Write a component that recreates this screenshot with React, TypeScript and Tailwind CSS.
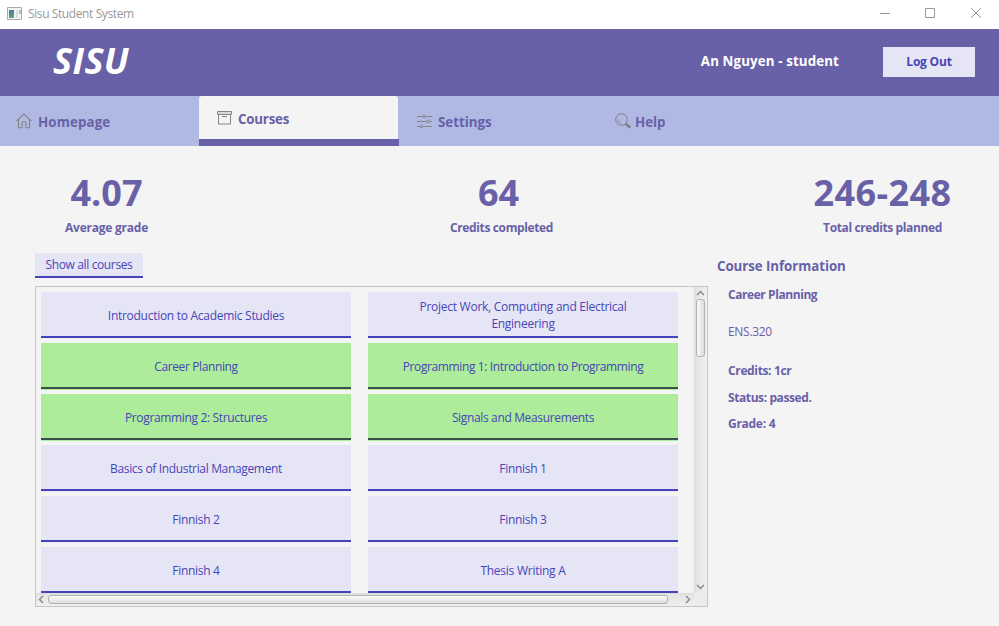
import React from "react";

type Course = { name: string; passed?: boolean; tracking: string };

const courses: Course[] = [
  { name: "Introduction to Academic Studies", tracking: "tracking-[-0.28px]" },
  { name: "Project Work, Computing and Electrical Engineering", tracking: "tracking-[-0.27px]" },
  { name: "Career Planning", passed: true, tracking: "tracking-[-0.38px]" },
  { name: "Programming 1: Introduction to Programming", passed: true, tracking: "tracking-[-0.38px]" },
  { name: "Programming 2: Structures", passed: true, tracking: "tracking-[-0.34px]" },
  { name: "Signals and Measurements", passed: true, tracking: "tracking-[-0.35px]" },
  { name: "Basics of Industrial Management", tracking: "tracking-[-0.34px]" },
  { name: "Finnish 1", tracking: "tracking-[-0.3px]" },
  { name: "Finnish 2", tracking: "tracking-[-0.3px]" },
  { name: "Finnish 3", tracking: "tracking-[-0.3px]" },
  { name: "Finnish 4", tracking: "tracking-[-0.3px]" },
  { name: "Thesis Writing A", tracking: "tracking-[-0.25px]" },
];

function HomeIcon() {
  return (
    <svg width="16" height="16" viewBox="0 0 16 16" fill="none" stroke="#858585" strokeWidth="1.100">
      <path d="M.6 8.200 8 1l7.400 7.200M2.500 6.800v8h3.600V10q0-1.500 1.900-1.500T9.900 10v4.800h3.600v-8" />
    </svg>
  );
}

function ArchiveIcon() {
  return (
    <svg width="15" height="14" viewBox="0 0 15 14" fill="none" stroke="#858585">
      <path d="M.5.5h14v3H.5zM1.500 3.500v9.500h12V3.500M5 5.500h5" />
      <path d="M1 2h13" stroke="#bdbdbd" />
    </svg>
  );
}

function SlidersIcon() {
  return (
    <svg width="15" height="14" viewBox="0 0 15 14" fill="none" stroke="#858585">
      <path d="M0 2.500h5.500M8.500 2.500H15M0 7.500h9.500M12.500 7.500H15M0 12.500h3M6 12.500h9" />
      <circle cx="7" cy="2.500" r="1.300" />
      <circle cx="11" cy="7.500" r="1.300" />
      <circle cx="4.500" cy="12.500" r="1.300" />
    </svg>
  );
}

function SearchIcon() {
  return (
    <svg width="17" height="17" viewBox="0 0 17 17" fill="none" stroke="#808080">
      <circle cx="6.500" cy="6.500" r="5.800" />
      <path d="M3 6.500q.3 2.800 3 3.600" strokeWidth=".8" />
      <path d="m10.800 10.800 4.500 4" strokeWidth="2.600" />
    </svg>
  );
}

function Chevron({ d, w, h }: { d: string; w: number; h: number }) {
  return (
    <svg width={w} height={h} viewBox={`0 0 ${w} ${h}`} fill="none" stroke="#858585" strokeWidth="1.300">
      <path d={d} />
    </svg>
  );
}

function CourseButton({ course }: { course: Course }) {
  return (
    <button className={`block h-[47px] w-[310px] shrink-0 pb-px ${course.passed ? "bg-[#adec9a]" : "bg-[#ebebf5]"}`}>
      <span
        className={`flex h-[46px] items-center justify-center border-b-2 px-7 pt-0.5 text-center text-[12px] leading-[17px] text-[#4646b8] ${
          course.passed ? "border-[#3d4f4b] bg-[#adec9a]" : "border-[#4444b8] bg-[#e6e5f5]"
        } ${course.tracking}`}
      >
        <span className="max-w-[246px]">{course.name}</span>
      </span>
    </button>
  );
}

export default function App() {
  return (
    <div className="flex h-[626px] w-[999px] flex-col overflow-hidden bg-[#f4f4f4] font-['Open_Sans','Noto_Sans',sans-serif] text-[#6861a7]">
      <div className="flex h-[29px] shrink-0 items-center bg-white pb-[3px] pl-[7px] text-[#999]">
        <svg width="16" height="13" viewBox="0 0 16 13">
          <defs>
            <linearGradient id="pane" x2="0.3" y2="1">
              <stop stopColor="#4470a8" />
              <stop offset="1" stopColor="#5ea777" />
            </linearGradient>
          </defs>
          <path d="M.5.5h14v12H.5z" fill="#f4f4f4" stroke="#aaa" />
          <path d="M2 3h5v8H2z" fill="url(#pane)" />
          <path d="M9 3h2v8H9z" fill="#ddd" />
          <path d="M12 3h2v4h-2z" fill="#a4c7b2" />
        </svg>
        <span className="ml-[5px] flex-1 pt-px text-[12px] leading-4 tracking-[-0.4px]">Sisu Student System</span>
        <svg width="119" height="29" viewBox="0 0 119 29" fill="none" stroke="#999" className="mt-[3px]">
          <path d="M0 13.500h10M45.500 8.500h9v9h-9zM91 8l10 10M101 8 91 18" />
        </svg>
      </div>

      <header className="flex h-[67px] shrink-0 items-center bg-[#6861a7] pr-6 pb-[2px] pl-[53px] text-white">
        <h1 className="flex-1 pb-px text-[36px] leading-10 font-bold tracking-[0.4px] italic">SISU</h1>
        <span className="text-[13.300px] font-bold tracking-[0.13px]">An Nguyen - student</span>
        <button className="ml-11 h-[30px] w-[92px] bg-[#e6e5f5] text-[12px] font-bold tracking-[-0.2px] text-[#4646b8]">
          Log Out
        </button>
      </header>

      <nav className="flex h-[50px] shrink-0 bg-[#afb9e3] text-[13.300px] leading-5 font-bold">
        <a className="flex w-[199px] items-center gap-[6px] pl-4">
          <HomeIcon />
          <span className="pt-0.5 tracking-[0.15px]">Homepage</span>
        </a>
        <a className="flex w-[200px] flex-col">
          <span className="mr-px flex h-[43px] items-center gap-[6px] rounded-t-[3px] bg-[#f4f4f4] pl-[18px]">
            <ArchiveIcon />
            <span className="pt-0.5 tracking-[-0.2px]">Courses</span>
          </span>
          <span className="h-[7px] bg-[#6861a7]" />
        </a>
        <a className="flex w-[199px] items-center gap-[6px] pl-[18px]">
          <SlidersIcon />
          <span className="pt-0.5">Settings</span>
        </a>
        <a className="flex items-center gap-[3px] pl-[17px]">
          <SearchIcon />
          <span className="pt-0.5">Help</span>
        </a>
      </nav>

      <section className="flex h-[107px] shrink-0 pt-6 pl-[65px] text-center whitespace-nowrap">
        <div className="w-[83px]">
          <p className="text-[36px] leading-[46px] font-bold">4.07</p>
          <p className="mt-1 text-[12px] leading-4 font-bold tracking-[-0.23px]">Average grade</p>
        </div>
        <div className="ml-[302px] w-[103px]">
          <p className="pr-[6px] text-[36px] leading-[46px] font-bold">64</p>
          <p className="mt-1 text-[12px] leading-4 font-bold tracking-[-0.37px]">Credits completed</p>
        </div>
        <div className="ml-[260px] w-[139px]">
          <p className="text-[36px] leading-[46px] font-bold tracking-[0.4px]">246-248</p>
          <p className="mt-1 text-[12px] leading-4 font-bold tracking-[-0.38px]">Total credits planned</p>
        </div>
      </section>

      <main className="flex flex-1 pl-[35px]">
        <div className="w-[673px] shrink-0">
          <button className="block h-[25px] w-[108px] border-b-2 border-[#4444b8] bg-[#e6e5f5] pt-px text-[12px] leading-[22px] tracking-[-0.37px] whitespace-nowrap text-[#4646b8]">
            Show all courses
          </button>
          <div className="mt-2 flex h-[321px] flex-col border border-[#c6c6c6]">
            <div className="flex h-[306px] shrink-0">
              <div className="grid h-[306px] w-[658px] grid-cols-[310px_310px] content-start gap-x-[17px] gap-y-1 overflow-hidden pt-[5px] pl-[5px]">
                {courses.map((course) => (
                  <CourseButton key={course.name} course={course} />
                ))}
              </div>
              <div className="flex w-[13px] flex-col items-center border-l border-[#dcdcdc] bg-linear-to-r from-[#e3e3e3] to-[#f0f0f0] pr-[2px]">
                <div className="flex h-3 items-center pb-px">
                  <Chevron d="m1 5 3.500-3.500L8 5" w={9} h={6} />
                </div>
                <div className="h-[58px] w-[9px] rounded-[3px] border border-[#b2b2b2] bg-linear-to-r from-[#fafafa] to-[#dedede]" />
                <div className="mt-auto flex h-3 items-center">
                  <Chevron d="m1 1 3.500 3.500L8 1" w={9} h={6} />
                </div>
              </div>
            </div>
            <div className="flex h-[13px] items-center">
              <div className="flex h-[13px] w-[658px] items-center border-t border-[#dcdcdc] bg-linear-to-b from-[#e3e3e3] to-[#f0f0f0] pb-[2px]">
                <div className="flex w-3 justify-start pl-[2px]">
                  <Chevron d="M5 1 1.500 4.500 5 8" w={6} h={9} />
                </div>
                <div className="h-[9px] w-[620px] rounded-[3px] border border-[#b2b2b2] bg-linear-to-b from-[#fafafa] to-[#dedede]" />
                <div className="ml-auto flex w-[9px] justify-start">
                  <Chevron d="m1 1 3.500 3.500L1 8" w={6} h={9} />
                </div>
              </div>
              <div className="h-[13px] flex-1 bg-[#ececec]" />
            </div>
          </div>
        </div>

        <aside className="flex flex-col pt-1 pl-[9px] text-[12px] leading-4 font-bold">
          <h2 className="text-[13.300px] leading-[18px] tracking-[-0.06px]">Course Information</h2>
          <div className="flex flex-col pl-[11px]">
            <p className="mt-3 tracking-[-0.43px]">Career Planning</p>
            <p className="mt-[21px] font-normal tracking-[-0.3px]">ENS.320</p>
            <p className="mt-[23px] tracking-[-0.36px]">Credits: 1cr</p>
            <p className="mt-[11px] tracking-[-0.41px]">Status: passed.</p>
            <p className="mt-[10px] tracking-[-0.28px]">Grade: 4</p>
          </div>
        </aside>
      </main>
    </div>
  );
}
